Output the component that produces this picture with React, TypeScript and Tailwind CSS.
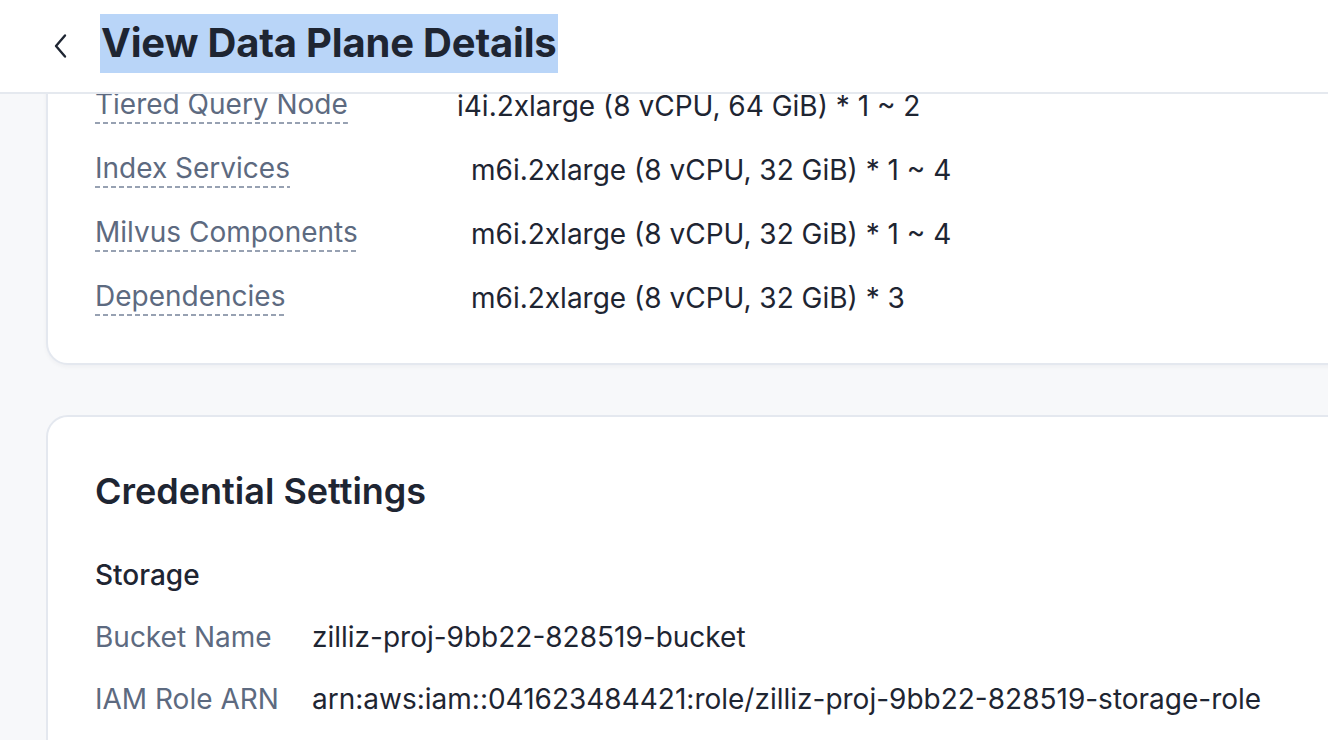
import React from "react";

const dashed =
  "bg-[repeating-linear-gradient(to_right,#97a1b2_0_5px,transparent_5px_8px)] bg-no-repeat bg-bottom bg-[length:100%_2px]";

function SpecRow({ label, value, labelW }: { label: string; value: string; labelW: string }) {
  return (
    <div className="flex h-16 items-center">
      <div className={`${labelW} shrink-0`}>
        <span className={`inline-block pb-[4px] text-[28px] leading-[32px] text-[#5d6a80] ${dashed}`}>{label}</span>
      </div>
      <div className="text-[28px] leading-[32px] text-[#1e2532] whitespace-nowrap">{value}</div>
    </div>
  );
}

function KV({ label, value }: { label: string; value: string }) {
  return (
    <div className="flex h-[62px] items-center">
      <div className="w-[217px] shrink-0 text-[28px] leading-[32px] text-[#5d6a80]">{label}</div>
      <div className="text-[28px] leading-[32px] text-[#1e2532] whitespace-nowrap">{value}</div>
    </div>
  );
}

export default function App() {
  return (
    <div
      className="h-[740px] w-[1328px] overflow-hidden bg-[#f7f8fa] flex flex-col"
      style={{ fontFamily: "Inter, 'Noto Sans', sans-serif" }}
    >
      <header className="relative z-10 h-[94px] shrink-0 bg-white border-b-2 border-[#e5e9ef] flex items-center pl-[52px]">
        <svg width="18" height="28" viewBox="0 0 18 28" className="shrink-0">
          <polyline points="13,3.5 4,14 13,24.5" fill="none" stroke="#1e2532" strokeWidth="2.4" strokeLinecap="round" strokeLinejoin="round" />
        </svg>
        <h1 className="ml-[30px] bg-[#b9d5f8] px-[1px] h-[59px] flex items-center text-[40px] font-bold text-[#1e2532] tracking-[-0.2px] mb-[6px]">
          View Data Plane Details
        </h1>
      </header>
      <main className="flex-1 pl-[46px]">
        <section className="-mt-[54px] w-[1400px] rounded-[22px] border-2 border-[#e4e8ef] bg-white shadow-[0_2px_4px_rgba(20,30,50,0.04)] pl-[47px] pt-[32px] pb-[33px]">
          <SpecRow label="Tiered Query Node" value="i4i.2xlarge (8 vCPU, 64 GiB) * 1 ~ 2" labelW="w-[362px]" />
          <SpecRow label="Index Services" value="m6i.2xlarge (8 vCPU, 32 GiB) * 1 ~ 4" labelW="w-[376px]" />
          <SpecRow label="Milvus Components" value="m6i.2xlarge (8 vCPU, 32 GiB) * 1 ~ 4" labelW="w-[376px]" />
          <SpecRow label="Dependencies" value="m6i.2xlarge (8 vCPU, 32 GiB) * 3" labelW="w-[376px]" />
        </section>
        <section className="mt-[50px] w-[1400px] h-[400px] rounded-[22px] border-2 border-[#e4e8ef] bg-white pl-[47px] pt-[52px]">
          <h2 className="text-[36px] leading-[44px] font-semibold text-[#1e2532]">Credential Settings</h2>
          <h3 className="mt-[46px] text-[28px] leading-[32px] font-medium text-[#1e2532]">Storage</h3>
          <div className="mt-[15px]">
            <KV label="Bucket Name" value="zilliz-proj-9bb22-828519-bucket" />
            <KV label="IAM Role ARN" value="arn:aws:iam::041623484421:role/zilliz-proj-9bb22-828519-storage-role" />
          </div>
        </section>
      </main>
    </div>
  );
}
